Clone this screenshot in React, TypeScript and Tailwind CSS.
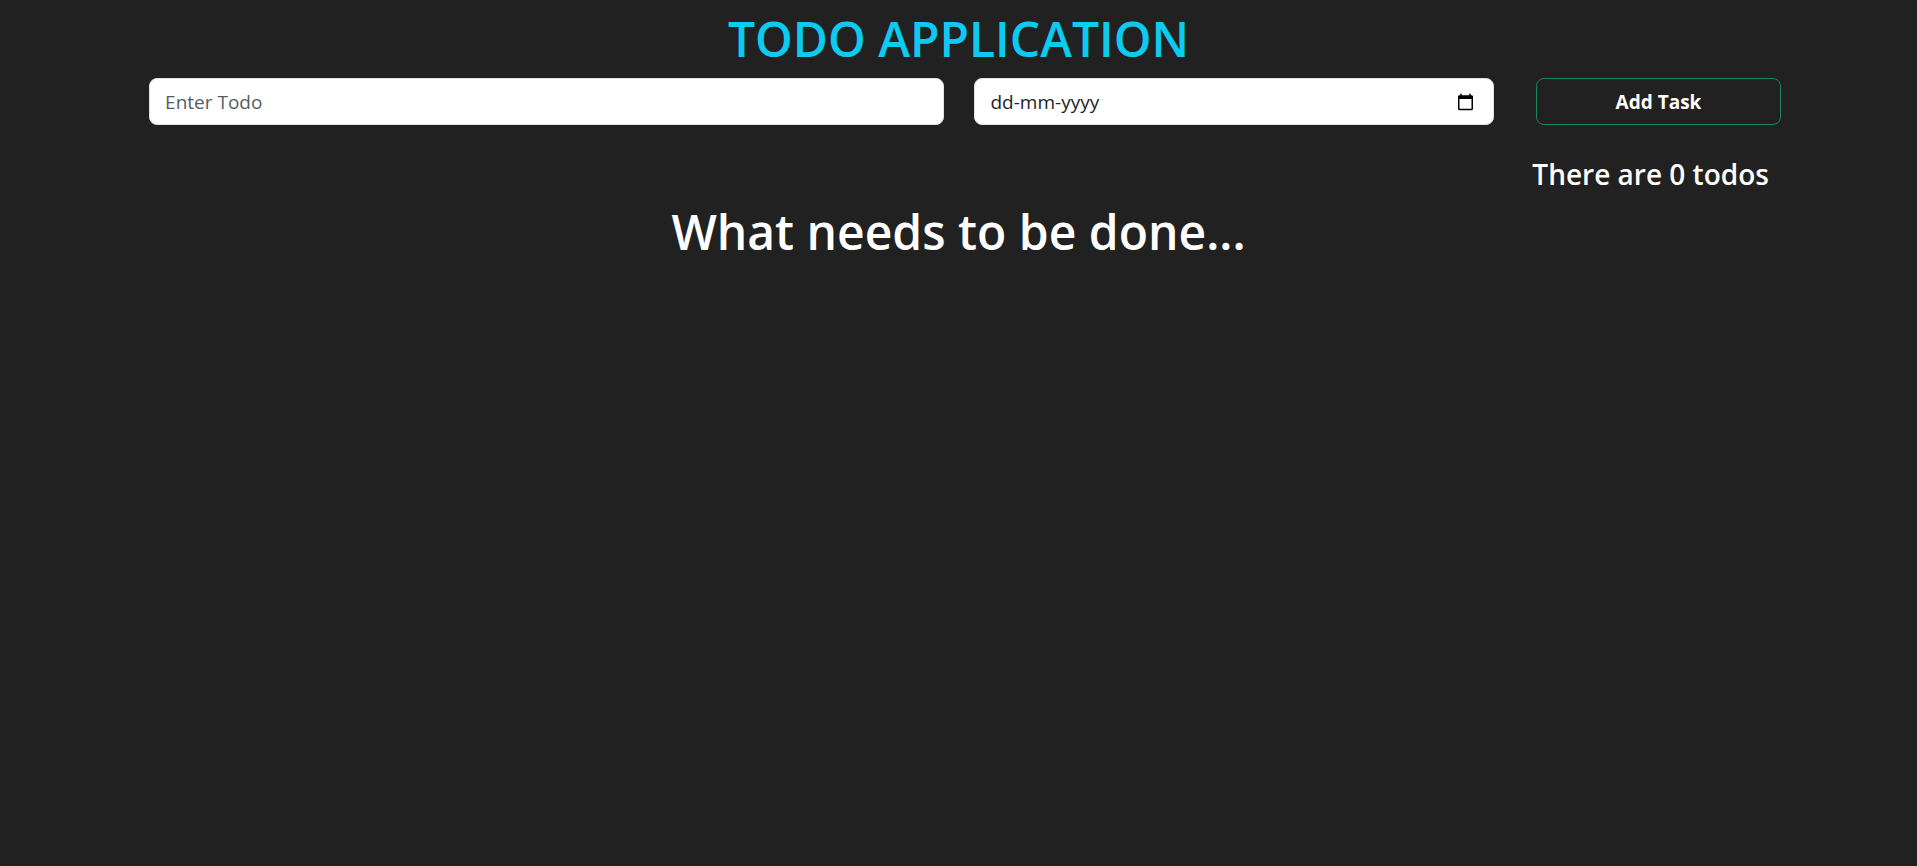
import { useState } from "react";
import type { FormEvent } from "react";

interface Todo {
  text: string;
  due: string;
}

const fieldClass =
  "block h-[47px] w-full rounded-lg border border-[#dee2e6] bg-white pr-4 pl-[15px] pt-px text-[19px] leading-7 text-[#212529] outline-none placeholder:text-[#595c5f] placeholder:opacity-100";

export default function App() {
  const [todos, setTodos] = useState<Todo[]>([]);
  const [text, setText] = useState("");
  const [due, setDue] = useState("");

  function addTask(event: FormEvent) {
    event.preventDefault();
    if (!text.trim()) return;
    setTodos([...todos, { text, due }]);
    setText("");
    setDue("");
  }

  return (
    <main className="min-h-screen bg-[#212121] px-[7.1%] pt-[9px] font-['Open_Sans',sans-serif] text-white">
      <h1 className="text-center text-5xl leading-[60px] font-semibold text-[#0dcaf0]">
        TODO APPLICATION
      </h1>
      <form onSubmit={addTask} className="mt-[9px] flex pl-[13px]">
        <div className="min-w-0 flex-[796]">
          <input
            type="text"
            aria-label="Todo"
            placeholder="Enter Todo"
            value={text}
            onChange={(e) => setText(e.target.value)}
            className={fieldClass}
          />
        </div>
        <div className="relative ml-[30px] min-w-0 flex-[520]">
          <input
            type="date"
            aria-label="Due date"
            value={due}
            onChange={(e) => setDue(e.target.value)}
            className={
              due ? fieldClass : `${fieldClass} [&::-webkit-datetime-edit]:opacity-0`
            }
          />
          {!due && (
            <span className="pointer-events-none absolute inset-y-0 left-4 flex items-center pt-px text-[19px] leading-7 text-[#212529]">
              dd-mm-yyyy
            </span>
          )}
        </div>
        <button
          type="submit"
          className="ml-[42px] h-[47px] min-w-0 flex-[243] rounded-lg border border-[#198754] pt-px text-[19px] leading-7 font-bold text-white"
        >
          Add Task
        </button>
      </form>
      <p className="mt-[31px] pr-3 text-right text-[28px] leading-9 font-semibold">
        There are {todos.length} todos
      </p>
      {todos.length === 0 ? (
        <h2 className="mt-[10px] text-center text-5xl leading-[60px] font-semibold">
          What needs to be done...
        </h2>
      ) : (
        <ul className="mt-[10px] pl-3 text-[19px]">
          {todos.map((todo, index) => (
            <li key={index} className="flex justify-between py-2">
              <span>{todo.text}</span>
              <span>{todo.due}</span>
            </li>
          ))}
        </ul>
      )}
    </main>
  );
}
